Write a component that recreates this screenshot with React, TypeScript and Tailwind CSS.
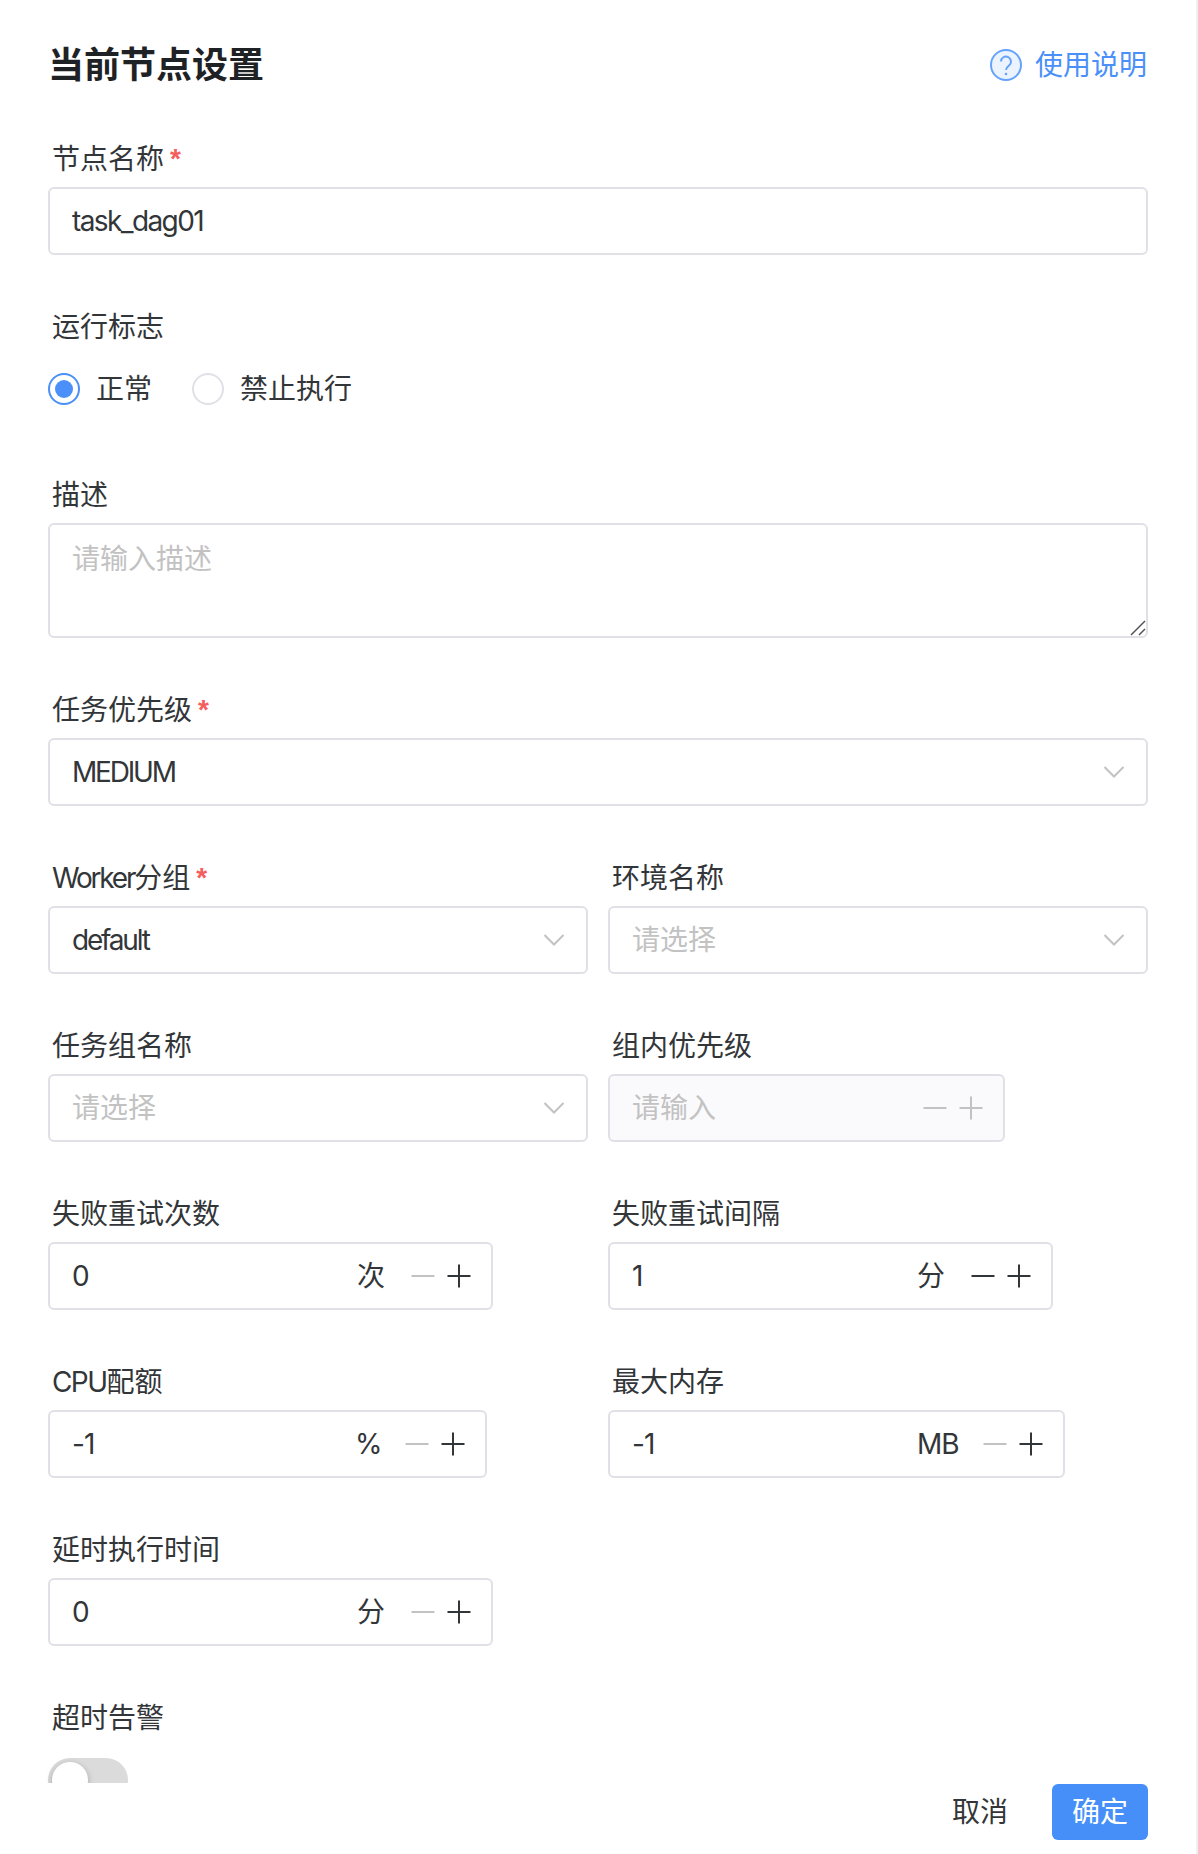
import type { ReactNode } from 'react';

// Inter runs wider than the Latin face in the picture
function Latin({ children, tight }: { children: ReactNode; tight?: boolean }) {
  return <span className={tight ? 'tracking-[-2.2px]' : 'tracking-[-1.6px]'}>{children}</span>;
}

function Label({ text, required }: { text: ReactNode; required?: boolean }) {
  return (
    <div className="h-[52px] pl-1 pb-1 flex items-center text-[28px] leading-[40px] text-[#333639]">
      {text}
      {required && <span className="ml-1.5 font-bold text-[#f55e5e] font-['Liberation_Sans',sans-serif]">*</span>}
    </div>
  );
}

function Item({ label, required, children }: { label: ReactNode; required?: boolean; children: ReactNode }) {
  return (
    <div className="pb-12">
      <Label text={label} required={required} />
      {children}
    </div>
  );
}

function Chevron() {
  return (
    <svg width="22" height="14" viewBox="0 0 22 14" fill="none" className="shrink-0">
      <path d="M1.5 2L11 11.5L20.5 2" stroke="#c2c2c2" strokeWidth="2" />
    </svg>
  );
}

function Select({ value, placeholder }: { value?: string; placeholder?: string }) {
  return (
    <div className="h-[68px] flex items-center justify-between pl-[22px] pr-[21px] border-2 border-[#e0e0e6] rounded-md text-[28px]">
      {value ? <span className="text-[#333639]"><Latin tight>{value}</Latin></span> : <span className="text-[#c2c2c2]">{placeholder}</span>}
      <Chevron />
    </div>
  );
}

function Minus({ color }: { color: string }) {
  return (
    <svg width="28" height="28" viewBox="0 0 28 28" fill="none">
      <path d="M2.5 14H25.5" stroke={color} strokeWidth="2" />
    </svg>
  );
}

function Plus({ color }: { color: string }) {
  return (
    <svg width="28" height="28" viewBox="0 0 28 28" fill="none">
      <path d="M2.5 14H25.5M14 2.5V25.5" stroke={color} strokeWidth="2" />
    </svg>
  );
}

function NumberInput({
  width,
  value,
  suffix,
  minusOff,
  disabled,
}: {
  width: string;
  value: string;
  suffix?: string;
  minusOff?: boolean;
  disabled?: boolean;
}) {
  return (
    <div
      className={`${width} h-[68px] flex items-center pl-[22px] pr-[18px] border-2 border-[#e0e0e6] rounded-md text-[28px] ${
        disabled ? 'bg-[#fafafc] text-[#c2c2c2]' : 'text-[#333639]'
      }`}
    >
      <span className={suffix ? 'w-[285px] tracking-[-1px]' : 'flex-1'}>{value}</span>
      {suffix && (
        <span className={`flex-1 tracking-[-1px] ${suffix === '%' ? '-ml-0.5' : ''}`}>{suffix}</span>
      )}
      <div className="flex gap-2">
        <Minus color={minusOff || disabled ? '#c2c2c2' : '#333639'} />
        <Plus color={disabled ? '#c2c2c2' : '#333639'} />
      </div>
    </div>
  );
}

function Radio({ label, checked }: { label: string; checked?: boolean }) {
  return (
    <div className="flex items-center gap-4">
      <div
        className={`w-8 h-8 rounded-full border-2 flex items-center justify-center ${
          checked ? 'border-[#4a90f8]' : 'border-[#e0e0e6]'
        }`}
      >
        {checked && <div className="w-[18px] h-[18px] rounded-full bg-[#4a90f8]" />}
      </div>
      <span className="text-[28px] text-[#333639]">{label}</span>
    </div>
  );
}

export default function App() {
  return (
    <div className="w-[1198px] h-[1854px] flex flex-col bg-white border-r-2 border-[#efeff5] font-['Inter','Noto_Sans_CJK_SC',sans-serif]">
      <div className="flex-1 min-h-0 overflow-hidden px-12">
        {/* Header */}
        <div className="h-[130px] mb-[5px] flex items-center justify-between">
          <h1 className="text-[36px] font-semibold text-[#1f2225]">当前节点设置</h1>
          <div className="flex items-center gap-[13px] pr-px pb-px text-[28px] text-[#4a90f8]">
            <svg width="32" height="32" viewBox="0 0 32 32" fill="none">
              <circle cx="16" cy="16" r="15" fill="#ebf3fe" stroke="#65a3fb" strokeWidth="2" />
              <path d="M11 12.5a5 5 0 1 1 8 4c-2 1.5-3 2.5-3 4.5" stroke="#65a3fb" strokeWidth="2" />
              <circle cx="16" cy="25" r="1.3" fill="#65a3fb" />
            </svg>
            <span>使用说明</span>
          </div>
        </div>

        <Item label="节点名称" required>
          <div className="h-[68px] flex items-center pl-[22px] border-2 border-[#e0e0e6] rounded-md text-[28px] text-[#333639]">
            <Latin>task_dag01</Latin>
          </div>
        </Item>

        <Item label="运行标志">
          <div className="h-[68px] flex items-center gap-10">
            <Radio label="正常" checked />
            <Radio label="禁止执行" />
          </div>
        </Item>

        <Item label="描述">
          <div className="relative h-[115px] pl-[22px] pt-[14px] border-2 border-[#e0e0e6] rounded-md text-[28px] leading-10 text-[#c2c2c2]">
            请输入描述
            <svg width="16" height="16" viewBox="0 0 16 16" fill="none" className="absolute right-0 bottom-0">
              <path d="M1 15L15 1M9 15L15 9" stroke="#555" strokeWidth="1.5" />
            </svg>
          </div>
        </Item>

        <Item label="任务优先级" required>
          <Select value="MEDIUM" />
        </Item>

        <div className="grid grid-cols-2 gap-x-5">
          <Item label={<><Latin tight>Worker</Latin>分组</>} required>
            <Select value="default" />
          </Item>
          <Item label="环境名称">
            <Select placeholder="请选择" />
          </Item>
          <Item label="任务组名称">
            <Select placeholder="请选择" />
          </Item>
          <Item label="组内优先级">
            <NumberInput width="w-[397px]" value="请输入" disabled />
          </Item>
          <Item label="失败重试次数">
            <NumberInput width="w-[445px]" value="0" suffix="次" minusOff />
          </Item>
          <Item label="失败重试间隔">
            <NumberInput width="w-[445px]" value="1" suffix="分" />
          </Item>
          <Item label={<><Latin>CPU</Latin>配额</>}>
            <NumberInput width="w-[439px]" value="-1" suffix="%" minusOff />
          </Item>
          <Item label="最大内存">
            <NumberInput width="w-[457px]" value="-1" suffix="MB" minusOff />
          </Item>
          <Item label="延时执行时间">
            <NumberInput width="w-[445px]" value="0" suffix="分" minusOff />
          </Item>
        </div>

        <Item label="超时告警">
          <div className="h-[68px] flex items-center">
            <div className="relative w-20 h-11 rounded-full bg-[#dbdbdb]">
              <div className="absolute left-1 top-1 w-9 h-9 rounded-full bg-white shadow-[0_2px_6px_rgba(0,0,0,0.25)]" />
            </div>
          </div>
        </Item>
      </div>

      {/* Footer */}
      <div className="h-[71px] pt-px pr-12 flex items-start justify-end bg-white">
        <div className="h-14 flex items-center mr-[44px] text-[28px] text-[#333639]">取消</div>
        <div className="w-24 h-14 flex items-center justify-center rounded-md bg-[#468ff8] text-[28px] text-white">确定</div>
      </div>
    </div>
  );
}
